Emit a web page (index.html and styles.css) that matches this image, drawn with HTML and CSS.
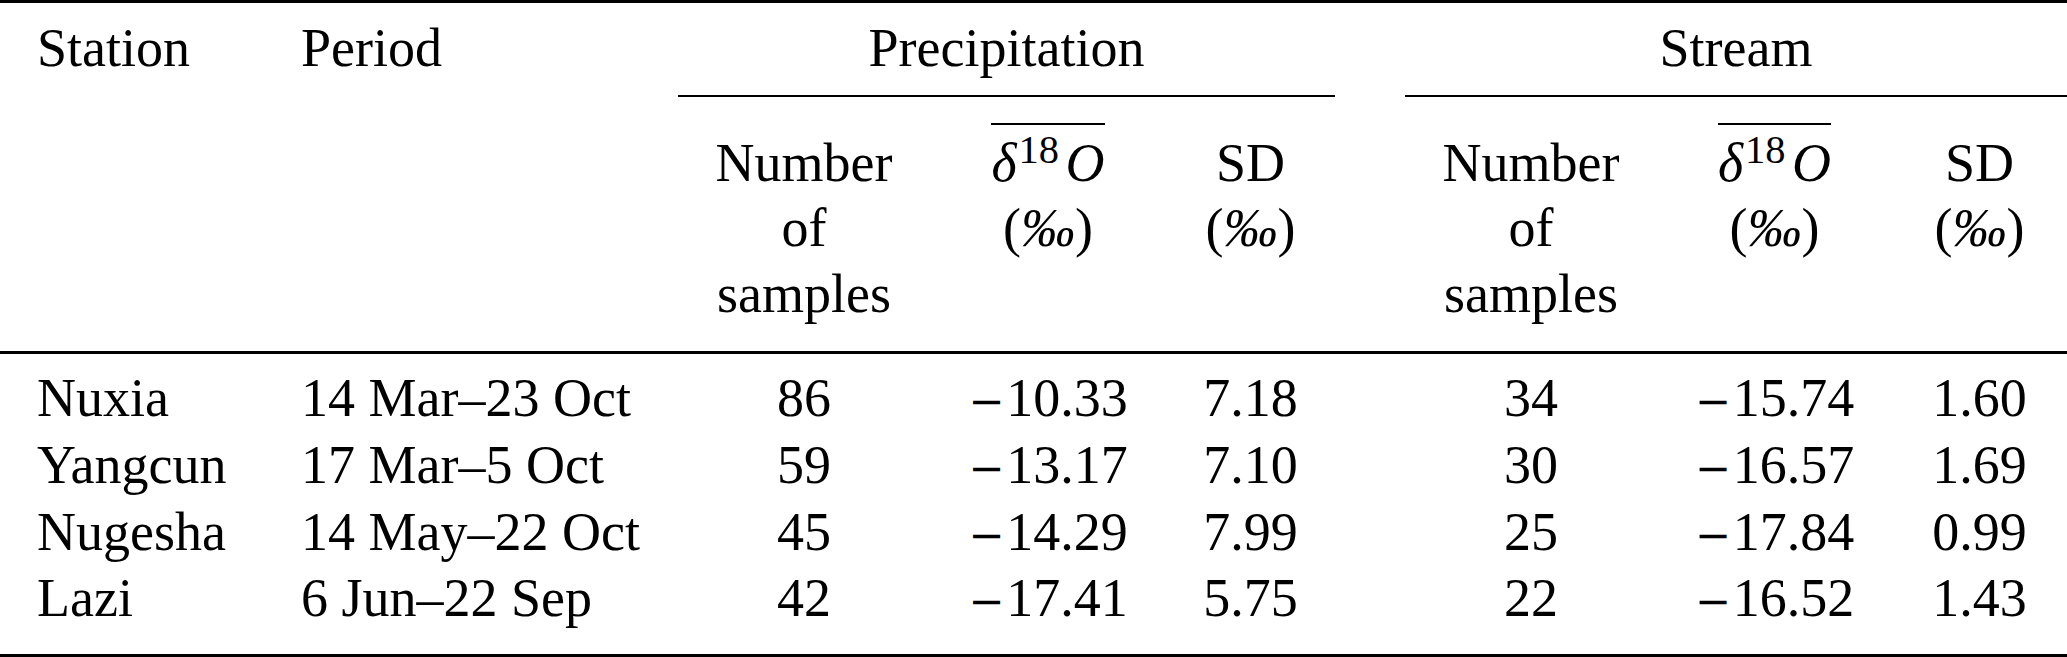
FILE: index.html
```html
<!DOCTYPE html>
<html lang="en">
<head>
<meta charset="utf-8">
<title>Isotope statistics</title>
<link rel="stylesheet" href="styles.css">
</head>
<body>
<table class="stats">
  <colgroup>
    <col class="c-station">
    <col class="c-period">
    <col class="c-num">
    <col class="c-mean">
    <col class="c-sd">
    <col class="c-gap">
    <col class="c-num">
    <col class="c-mean2">
    <col class="c-sd2">
  </colgroup>
  <thead>
    <tr class="group-row">
      <th class="lbl" rowspan="2">Station</th>
      <th class="lbl" rowspan="2">Period</th>
      <th class="group" colspan="3">Precipitation</th>
      <th class="gap" rowspan="2"></th>
      <th class="group" colspan="3">Stream</th>
    </tr>
    <tr class="sub-row">
      <th>Number<br>of<br>samples</th>
      <th><span class="mean"><i>δ</i><sup>18</sup><i class="o">O</i></span><br>(<i>‰</i>)</th>
      <th>SD<br>(<i>‰</i>)</th>
      <th>Number<br>of<br>samples</th>
      <th><span class="mean"><i>δ</i><sup>18</sup><i class="o">O</i></span><br>(<i>‰</i>)</th>
      <th>SD<br>(<i>‰</i>)</th>
    </tr>
  </thead>
  <tbody>
    <tr>
      <td class="lbl">Nuxia</td>
      <td class="lbl">14 Mar–23 Oct</td>
      <td>86</td>
      <td><span class="neg">−</span>10.33</td>
      <td>7.18</td>
      <td></td>
      <td>34</td>
      <td><span class="neg">−</span>15.74</td>
      <td>1.60</td>
    </tr>
    <tr>
      <td class="lbl">Yangcun</td>
      <td class="lbl">17 Mar–5 Oct</td>
      <td>59</td>
      <td><span class="neg">−</span>13.17</td>
      <td>7.10</td>
      <td></td>
      <td>30</td>
      <td><span class="neg">−</span>16.57</td>
      <td>1.69</td>
    </tr>
    <tr>
      <td class="lbl">Nugesha</td>
      <td class="lbl">14 May–22 Oct</td>
      <td>45</td>
      <td><span class="neg">−</span>14.29</td>
      <td>7.99</td>
      <td></td>
      <td>25</td>
      <td><span class="neg">−</span>17.84</td>
      <td>0.99</td>
    </tr>
    <tr>
      <td class="lbl">Lazi</td>
      <td class="lbl">6 Jun–22 Sep</td>
      <td>42</td>
      <td><span class="neg">−</span>17.41</td>
      <td>5.75</td>
      <td></td>
      <td>22</td>
      <td><span class="neg">−</span>16.52</td>
      <td>1.43</td>
    </tr>
  </tbody>
</table>
</body>
</html>
```

FILE: styles.css
```css
html, body {
  margin: 0;
  padding: 0;
  background: #ffffff;
}

.stats {
  border-collapse: separate;
  border-spacing: 0;
  table-layout: fixed;
  width: 2067px;
  border-top: 3px solid #000;
  border-bottom: 3px solid #000;
  font-family: "Liberation Serif", "Times New Roman", serif;
  font-size: 54px;
  color: #000;
}

.c-station { width: 264px; }
.c-period { width: 414px; }
.c-num { width: 252px; }
.c-mean { width: 236px; }
.c-sd { width: 169px; }
.c-gap { width: 70px; }
.c-mean2 { width: 235px; }
.c-sd2 { width: 175px; }

.stats th,
.stats td {
  padding: 0;
  font-weight: normal;
  white-space: nowrap;
  vertical-align: top;
  text-align: center;
}

.stats .lbl {
  text-align: left;
  padding-left: 37px;
}

.group-row th {
  line-height: 66.7px;
  padding-top: 12.4px;
}

.group-row .group {
  padding-bottom: 12.9px;
  border-bottom: 2px solid #000;
}

.group-row .lbl,
.group-row .gap {
  border-bottom: 3px solid #000;
}

.sub-row th {
  line-height: 65.5px;
  padding-top: 34px;
  padding-bottom: 23.5px;
  border-bottom: 3px solid #000;
}

.mean {
  border-top: 2px solid #000;
  padding-top: 8px;
}

.mean sup {
  font-size: 0.75em;
  vertical-align: 18px;
  line-height: 0;
  margin-left: 0.05em;
}

.mean .o {
  margin-left: 0.12em;
}

.stats td {
  line-height: 66.7px;
}

.stats tbody tr:first-child td {
  padding-top: 11.4px;
}

.stats tbody tr:last-child td {
  padding-bottom: 21.8px;
}

.neg {
  font-family: "DejaVu Serif", "Liberation Serif", serif;
  font-size: 0.8em;
  line-height: 0;
  margin-right: 0.04em;
}
```
